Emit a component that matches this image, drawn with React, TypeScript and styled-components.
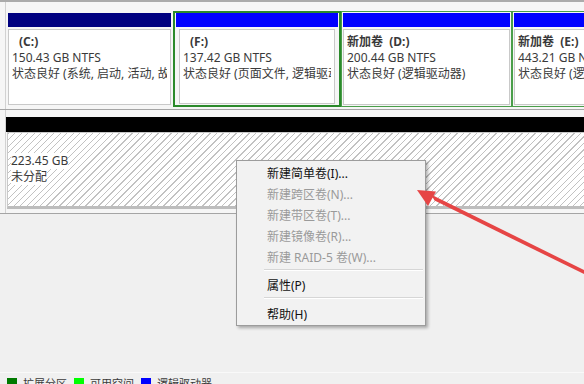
import styled, { createGlobalStyle } from 'styled-components';

const GlobalStyle = createGlobalStyle`
  html, body { margin: 0; padding: 0; }
  body {
    background: #f0f0f0;
    font-family: 'Segoe UI', 'Noto Sans', 'Noto Sans CJK SC', sans-serif;
    font-size: 12px;
    color: #3a3a3a;
    overflow: hidden;
  }
`;

const Page = styled.div`
  position: relative;
  width: 584px;
  height: 384px;
  overflow: hidden;
  display: flex;
  flex-direction: column;
`;

const TopEdge = styled.div`
  height: 2px;
  background: #ababab;
  flex: none;
`;

const DiskRow = styled.div<{ $height: number; $padTop: number }>`
  display: flex;
  flex: none;
  height: ${({ $height }) => $height}px;
  background: #f6f6f6;
  border-bottom: 1px solid #a5a5a5;
  box-sizing: border-box;
  overflow: hidden;
  & > section {
    padding-top: ${({ $padTop }) => $padTop}px;
  }
`;

const Gutter = styled.div`
  width: 5px;
  flex: none;
  border-right: 1px solid #d2d2d2;
`;

const Strip = styled.section`
  display: flex;
  align-items: flex-start;
  flex: 1;
  min-width: 0;
`;

type Frame = 'none' | 'thin' | 'thick';

const Cell = styled.div<{ $width: number; $frame: Frame }>`
  flex: none;
  width: ${({ $width }) => $width}px;
  height: 96px;
  box-sizing: border-box;
  display: flex;
  flex-direction: column;
  gap: 2px;
  overflow: hidden;
  padding: ${({ $frame }) => ($frame === 'thick' ? '0 1px 1px' : $frame === 'thin' ? '1px' : '2px')};
  border: ${({ $frame }) =>
    $frame === 'thick' ? '2px solid #2b8a2b' : $frame === 'thin' ? '1px solid #4a9e4a' : 'none'};
`;

const Header = styled.div<{ $color: string; $h?: number }>`
  height: ${({ $h }) => $h ?? 14}px;
  flex: none;
  background: ${({ $color }) => $color};
`;

const Body = styled.div<{ $hatched?: boolean; $inset?: number }>`
  flex: 1;
  min-height: 0;
  margin: 0 ${({ $inset }) => $inset ?? 0}px;
  border: 1px solid #c9c9c9;
  padding: 4px 3px;
  background: ${({ $hatched }) =>
    $hatched
      ? 'repeating-linear-gradient(135deg, #c2c2c2 0 1px, #ffffff 1px 4.6px)'
      : '#ffffff'};
  overflow: hidden;
`;

const Line = styled.div<{ $bold?: boolean; $indent?: number }>`
  height: 16px;
  line-height: 16px;
  white-space: pre;
  overflow: hidden;
  font-weight: ${({ $bold }) => ($bold ? 700 : 400)};
  padding-left: ${({ $indent }) => $indent ?? 0}px;
`;

const Mark = styled.span`
  background: #ffffff;
`;

const UnallocCell = styled.div`
  flex: 1;
  height: 92px;
  display: flex;
  flex-direction: column;
`;

const UnallocBody = styled(Body)`
  border-bottom: 3px solid #bdbdbd;
  border-right: none;
  margin-left: 1px;
  padding-top: 20px;
`;

const Filler = styled.div`
  flex: 1;
`;

const Legend = styled.div`
  flex: none;
  height: 12px;
  box-sizing: border-box;
  border-top: 1px solid #f9f9f9;
  padding-top: 4px;
  display: flex;
  align-items: flex-start;
  margin-left: -49px;
  font-size: 11px;
  color: #3a3a3a;
`;

const LegendItem = styled.div`
  display: flex;
  flex: none;
  align-items: flex-start;
  gap: 6px;
  margin-right: 7px;
  white-space: nowrap;
  line-height: 13px;
`;

const Swatch = styled.span<{ $color: string }>`
  width: 10px;
  height: 10px;
  margin-top: 1px;
  flex: none;
  background: ${({ $color }) => $color};
`;

const Menu = styled.div`
  position: absolute;
  left: 236px;
  top: 160px;
  width: 190px;
  box-sizing: border-box;
  padding: 2px 0 0;
  background: #f2f2f2;
  border: 1px solid #9c9c9c;
  box-shadow: 2px 2px 3px rgba(0, 0, 0, 0.3);
  display: flex;
  flex-direction: column;
`;

const Item = styled.div<{ $disabled?: boolean }>`
  height: 21px;
  line-height: 21px;
  padding-left: 30px;
  font-size: 12px;
  color: ${({ $disabled }) => ($disabled ? '#9a9a9a' : '#111111')};
  white-space: nowrap;
`;

const Separator = styled.div<{ $after: number }>`
  height: 1px;
  background: #d6d6d6;
  border-bottom: 1px solid #ffffff;
  margin: 1px 2px ${({ $after }) => $after}px 27px;
`;

const Overlay = styled.svg`
  position: absolute;
  left: 0;
  top: 0;
  pointer-events: none;
`;

type Part = {
  width: number;
  color: string;
  frame: Frame;
  inset: number;
  name: string;
  letter: string;
  size: string;
  status: string;
};

const parts: Part[] = [
  { width: 167, color: '#000080', frame: 'none', inset: 0, name: '', letter: 'C', size: '150.43 GB NTFS', status: '状态良好 (系统, 启动, 活动, 故障转储, 主分区)' },
  { width: 168, color: '#0000ff', frame: 'thick', inset: 3, name: '', letter: 'F', size: '137.42 GB NTFS', status: '状态良好 (页面文件, 逻辑驱动器)' },
  { width: 171, color: '#0000ff', frame: 'thin', inset: 0, name: '新加卷', letter: 'D', size: '200.44 GB NTFS', status: '状态良好 (逻辑驱动器)' },
  { width: 171, color: '#0000ff', frame: 'thin', inset: 0, name: '新加卷', letter: 'E', size: '443.21 GB NTFS', status: '状态良好 (逻辑驱动器)' },
];

const menuItems = [
  { label: '新建简单卷(I)...', disabled: false },
  { label: '新建跨区卷(N)...', disabled: true },
  { label: '新建带区卷(T)...', disabled: true },
  { label: '新建镜像卷(R)...', disabled: true },
  { label: '新建 RAID-5 卷(W)...', disabled: true },
];

const legend = [
  { color: '#000000', label: '主分区' },
  { color: '#007a00', label: '扩展分区' },
  { color: '#00ff00', label: '可用空间' },
  { color: '#0000ff', label: '逻辑驱动器' },
];

export default function App() {
  return (
    <>
      <GlobalStyle />
      <Page>
        <TopEdge />
        <DiskRow $height={108} $padTop={9}>
          <Gutter />
          <Strip>
            {parts.map((p) => (
              <Cell key={p.letter} $width={p.width} $frame={p.frame}>
                <Header $color={p.color} />
                <Body $inset={p.inset}>
                  <Line $bold $indent={p.name ? 0 : 7}>
                    {p.name ? `${p.name}  (${p.letter}:)` : `(${p.letter}:)`}
                  </Line>
                  <Line>{p.size}</Line>
                  <Line>{p.status}</Line>
                </Body>
              </Cell>
            ))}
          </Strip>
        </DiskRow>
        <DiskRow $height={104} $padTop={7}>
          <Gutter />
          <Strip>
            <UnallocCell>
              <Header $color="#000000" $h={15} />
              <UnallocBody $hatched>
                <Line>
                  <Mark>223.45 GB</Mark>
                </Line>
                <Line>
                  <Mark>未分配</Mark>
                </Line>
              </UnallocBody>
            </UnallocCell>
          </Strip>
        </DiskRow>
        <Filler />
        <Legend>
          {legend.map((l) => (
            <LegendItem key={l.label}>
              <Swatch $color={l.color} />
              {l.label}
            </LegendItem>
          ))}
        </Legend>

        <Menu>
          {menuItems.map((m) => (
            <Item key={m.label} $disabled={m.disabled}>
              {m.label}
            </Item>
          ))}
          <Separator $after={4} />
          <Item>属性(P)</Item>
          <Separator $after={5} />
          <Item>帮助(H)</Item>
        </Menu>

        <Overlay width="584" height="384" viewBox="0 0 584 384">
          <polygon points="431,194.5 434.5,200.5 600,282 600,278" fill="#e64545" />
          <polygon points="417,190 436,191.5 428,206" fill="#e64545" />
        </Overlay>
      </Page>
    </>
  );
}
